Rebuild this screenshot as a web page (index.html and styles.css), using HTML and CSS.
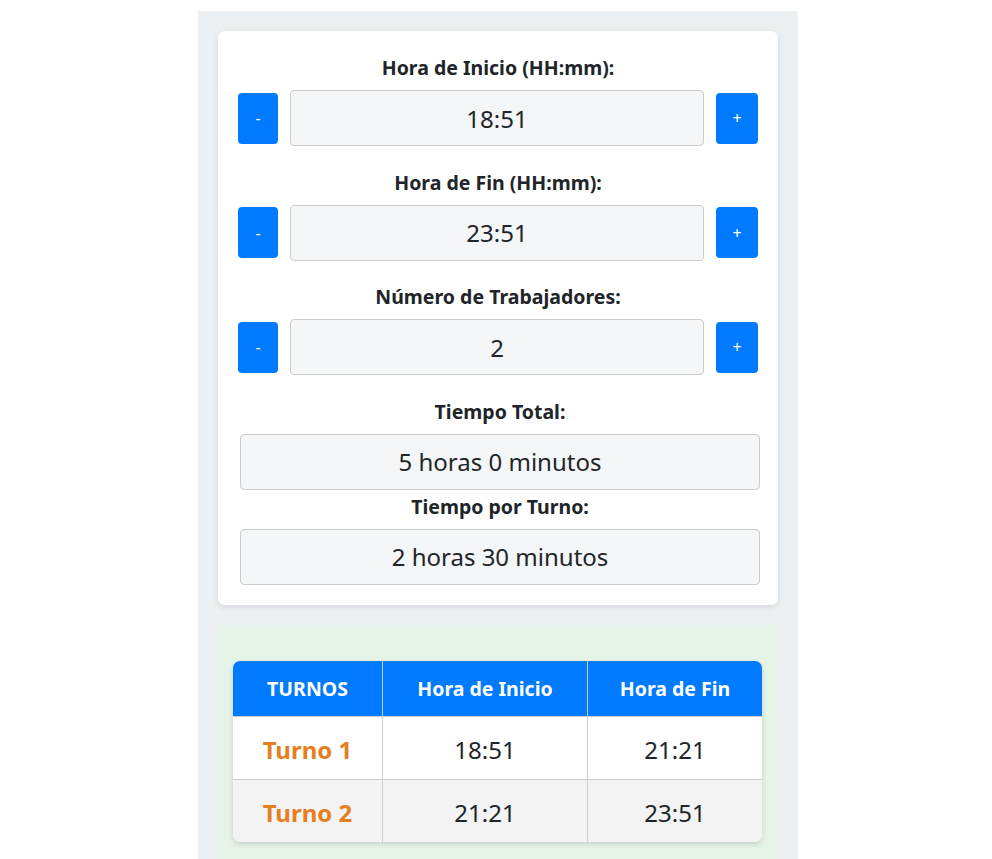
FILE: index.html
```html
<!DOCTYPE html>
<html lang="es">
<head>
<meta charset="utf-8">
<title>Turnos</title>
<link rel="stylesheet" href="styles.css">
</head>
<body>
<div class="wrap">
  <div class="card">
    <div class="group">
      <label class="lbl">Hora de Inicio (HH:mm):</label>
      <div class="row">
        <button class="btn btn-minus">-</button>
        <div class="field">18:51</div>
        <button class="btn btn-plus">+</button>
      </div>
    </div>
    <div class="group">
      <label class="lbl">Hora de Fin (HH:mm):</label>
      <div class="row">
        <button class="btn btn-minus">-</button>
        <div class="field">23:51</div>
        <button class="btn btn-plus">+</button>
      </div>
    </div>
    <div class="group">
      <label class="lbl">Número de Trabajadores:</label>
      <div class="row">
        <button class="btn btn-minus">-</button>
        <div class="field">2</div>
        <button class="btn btn-plus">+</button>
      </div>
    </div>
    <div class="result first">
      <label class="lbl">Tiempo Total:</label>
      <div class="box">5 horas 0 minutos</div>
    </div>
    <div class="result">
      <label class="lbl">Tiempo por Turno:</label>
      <div class="box">2 horas 30 minutos</div>
    </div>
  </div>
  <div class="shifts">
    <table class="tbl">
      <thead>
        <tr><th class="c1">TURNOS</th><th class="c2">Hora de Inicio</th><th class="c3">Hora de Fin</th></tr>
      </thead>
      <tbody>
        <tr><td class="turno">Turno 1</td><td>18:51</td><td>21:21</td></tr>
        <tr class="alt"><td class="turno">Turno 2</td><td>21:21</td><td>23:51</td></tr>
      </tbody>
    </table>
  </div>
</div>
</body>
</html>
```

FILE: styles.css
```css
html, body {
  margin: 0;
  background: #ffffff;
}
body {
  padding: 11px 0 0 4px;
  font-family: "Noto Sans", "Open Sans", sans-serif;
  color: #212529;
}
.wrap {
  width: 600px;
  margin: 0 auto;
  background: #edf0f3;
  padding: 20px 20px 0 20px;
  box-sizing: border-box;
  height: 848px;
}
.card {
  background: #ffffff;
  border-radius: 7px;
  box-shadow: 0 2px 6px rgba(0,0,0,0.10);
  padding: 25px 20px 20px 20px;
}
.group {
  margin-bottom: 24.5px;
}
.lbl {
  display: block;
  text-align: center;
  font-weight: 700;
  font-size: 19.5px;
  line-height: 24px;
  margin-bottom: 10px;
  color: #212529;
}
.row {
  display: flex;
  align-items: center;
  gap: 12px;
  height: 56px;
}
.btn {
  border: none;
  background: #007bff;
  color: #ffffff;
  border-radius: 4px;
  height: 51px;
  font-family: "Noto Sans", sans-serif;
  font-size: 16px;
  padding: 0;
  flex: none;
}
.btn-minus { width: 40px; }
.btn-plus { width: 42px; }
.field {
  flex: 1;
  height: 56px;
  box-sizing: border-box;
  border: 1px solid #cccccc;
  border-radius: 4px;
  background: #f5f6f8;
  display: flex;
  align-items: center;
  justify-content: center;
  font-size: 24px;
}
.result {
  margin: 0 -2px 0 2px;
}
.result.first {
  margin-top: 1px;
  margin-bottom: 5px;
}
.box {
  height: 56px;
  box-sizing: border-box;
  border: 1px solid #cccccc;
  border-radius: 4px;
  background: #f5f6f8;
  display: flex;
  align-items: center;
  justify-content: center;
  font-size: 24px;
}
.shifts {
  margin-top: 20px;
  background: #e6f4e8;
  padding: 36px 16px 40px 15px;
}
.tbl {
  width: 529px;
  border-collapse: separate;
  border-spacing: 0;
  border-radius: 7px;
  overflow: hidden;
  box-shadow: 0 2px 5px rgba(0,0,0,0.15);
  background: #ffffff;
}
.tbl th {
  background: #007bff;
  color: #ffffff;
  font-weight: 700;
  font-size: 19.5px;
  height: 55px;
  padding: 0;
  border-left: 1px solid #cccccc;
  box-sizing: border-box;
}
.tbl th:first-child { border-left: none; }
.c1 { width: 149px; }
.c2 { width: 205px; }
.c3 { width: 175px; }
.tbl td {
  height: 63px;
  padding: 4px 0 0 0;
  text-align: center;
  font-size: 24px;
  border-top: 1px solid #cccccc;
  border-left: 1px solid #cccccc;
  box-sizing: border-box;
}
.tbl td:first-child { border-left: none; }
.tbl .alt td { background: #f3f3f3; }
.turno {
  color: #e67e22;
  font-weight: 700;
}
```
